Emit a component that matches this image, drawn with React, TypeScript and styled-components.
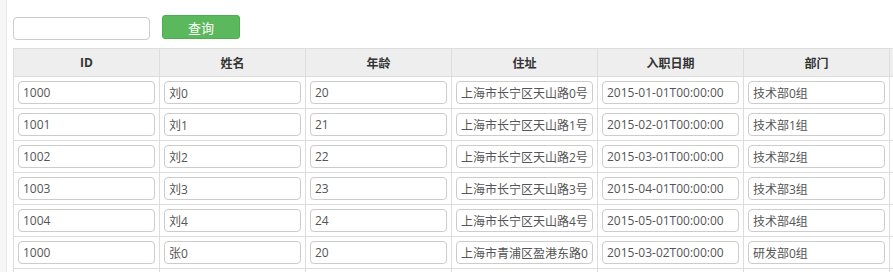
import React from "react";
import styled, { createGlobalStyle } from "styled-components";

const GlobalStyle = createGlobalStyle`
  html, body {
    margin: 0;
    padding: 0;
    overflow: hidden;
    background: #ffffff;
  }
  body {
    font-family: "Open Sans", "Noto Sans CJK SC", sans-serif;
    font-size: 12px;
    color: #555;
  }
`;

const Shell = styled.div`
  display: flex;
  min-height: 272px;
`;

const Sidebar = styled.div`
  flex: 0 0 6px;
  background: #f6f6f6;
  border-right: 1px solid #e9e9e9;
`;

const Main = styled.div`
  flex: 1;
  padding: 14px 0 0 6px;
`;

const Toolbar = styled.div`
  display: flex;
  align-items: center;
  gap: 12px;
  height: 26px;
  margin-bottom: 8px;
`;

const SearchInput = styled.input`
  box-sizing: border-box;
  width: 137px;
  height: 23px;
  margin-top: 3px;
  border: 1px solid #ccc;
  border-radius: 4px;
  padding: 0 4px;
  font: inherit;
  color: #555;
  outline: none;
`;

const QueryButton = styled.button`
  box-sizing: border-box;
  width: 78px;
  height: 24px;
  border: 1px solid #4cae4c;
  border-radius: 3px;
  background: #5cb85c;
  color: #fff;
  font-family: "Open Sans", "Noto Sans CJK SC", sans-serif;
  font-size: 13px;
  padding: 0;
  cursor: pointer;
`;

const Table = styled.table`
  border-collapse: collapse;
  table-layout: fixed;
  width: 1023px;
`;

const HeadRow = styled.tr`
  height: 28px;
`;

const BodyRow = styled.tr`
  height: 32px;
`;

const HeadCell = styled.th`
  box-sizing: border-box;
  width: 146px;
  padding: 0;
  background: #eeeeee;
  border: 1px solid #dddddd;
  color: #333;
  font-weight: bold;
  font-size: 12px;
  text-align: center;
`;

const Cell = styled.td`
  padding: 0 4px;
  border: 1px solid #dddddd;
  vertical-align: middle;
`;

const CellInput = styled.input`
  display: block;
  box-sizing: border-box;
  width: 100%;
  height: 23px;
  border: 1px solid #cccccc;
  border-radius: 4px;
  padding: 0 4px;
  font-family: "Open Sans", "Noto Sans CJK SC", sans-serif;
  font-size: 12px;
  color: #555;
  background: #fff;
  outline: none;
`;

type Row = {
  id: string;
  name: string;
  age: string;
  address: string;
  date: string;
  dept: string;
};

const rows: Row[] = [
  { id: "1000", name: "刘0", age: "20", address: "上海市长宁区天山路0号", date: "2015-01-01T00:00:00", dept: "技术部0组" },
  { id: "1001", name: "刘1", age: "21", address: "上海市长宁区天山路1号", date: "2015-02-01T00:00:00", dept: "技术部1组" },
  { id: "1002", name: "刘2", age: "22", address: "上海市长宁区天山路2号", date: "2015-03-01T00:00:00", dept: "技术部2组" },
  { id: "1003", name: "刘3", age: "23", address: "上海市长宁区天山路3号", date: "2015-04-01T00:00:00", dept: "技术部3组" },
  { id: "1004", name: "刘4", age: "24", address: "上海市长宁区天山路4号", date: "2015-05-01T00:00:00", dept: "技术部4组" },
  { id: "1000", name: "张0", age: "20", address: "上海市青浦区盈港东路0号", date: "2015-03-02T00:00:00", dept: "研发部0组" },
  { id: "1001", name: "张1", age: "21", address: "上海市青浦区盈港东路1号", date: "2015-04-02T00:00:00", dept: "研发部1组" },
];

const headers = ["ID", "姓名", "年龄", "住址", "入职日期", "部门", ""];

export default function App() {
  return (
    <>
      <GlobalStyle />
      <Shell>
        <Sidebar />
        <Main>
          <Toolbar>
            <SearchInput type="text" />
            <QueryButton type="button">查询</QueryButton>
          </Toolbar>
          <Table>
            <thead>
              <HeadRow>
                {headers.map((h, i) => (
                  <HeadCell key={i}>{h}</HeadCell>
                ))}
              </HeadRow>
            </thead>
            <tbody>
              {rows.map((r, i) => (
                <BodyRow key={i}>
                  <Cell><CellInput defaultValue={r.id} /></Cell>
                  <Cell><CellInput defaultValue={r.name} /></Cell>
                  <Cell><CellInput defaultValue={r.age} /></Cell>
                  <Cell><CellInput defaultValue={r.address} /></Cell>
                  <Cell><CellInput defaultValue={r.date} /></Cell>
                  <Cell><CellInput defaultValue={r.dept} /></Cell>
                  <Cell />
                </BodyRow>
              ))}
            </tbody>
          </Table>
        </Main>
      </Shell>
    </>
  );
}
